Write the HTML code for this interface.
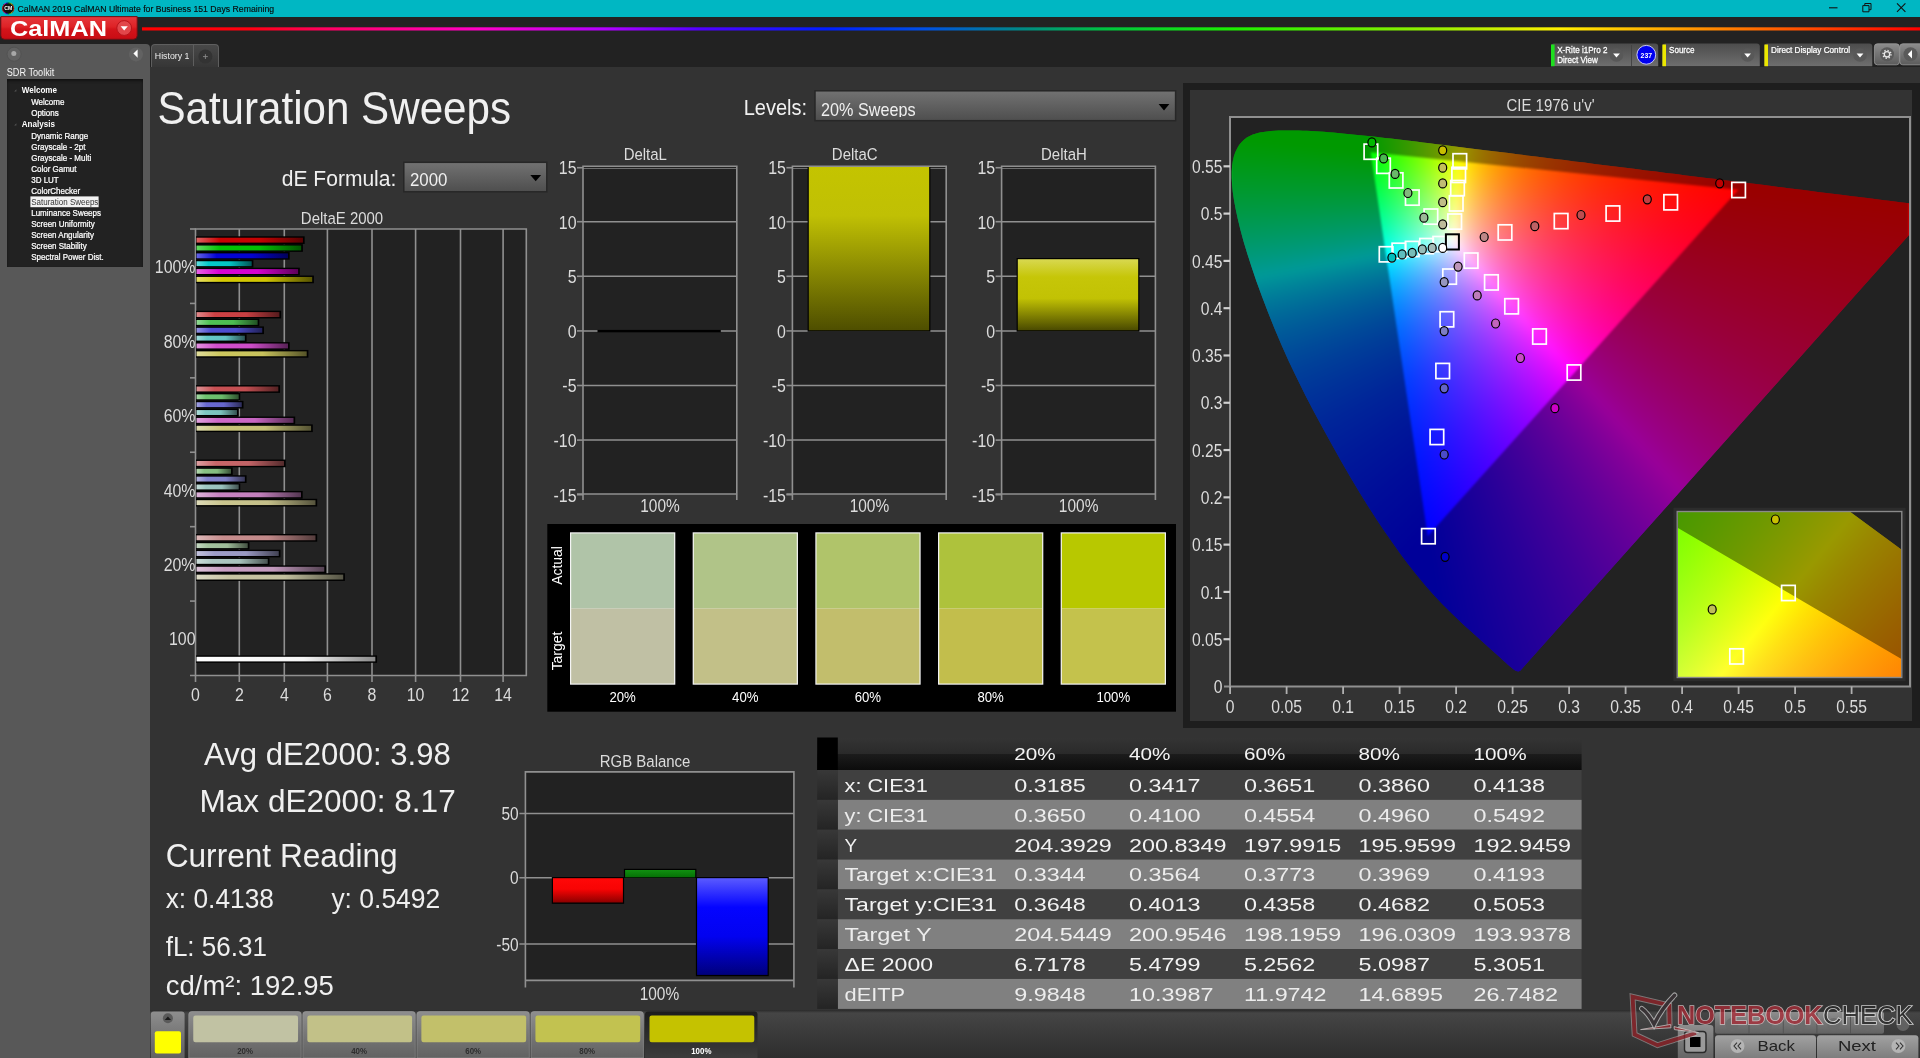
<!DOCTYPE html>
<html><head><meta charset="utf-8"><title>CalMAN 2019 - Saturation Sweeps</title>
<style>
html,body{margin:0;padding:0;background:#222;overflow:hidden}
body{width:1920px;height:1058px;position:relative;font-family:"Liberation Sans",sans-serif}
#bg div{position:absolute}
</style></head><body>
<div id="bg"><div style="left:0px;top:0px;width:1920px;height:17px;background:#00b7c3"></div><div style="left:150px;top:66.6px;width:1770px;height:943.4px;background:#333"></div><div style="left:0px;top:43.5px;width:149.5px;height:1015px;background:#585858;border-radius:0 4px 0 0"></div><div style="left:7px;top:79.2px;width:136px;height:188px;background:#222;box-shadow:inset 0 2px 3px #111"></div><div style="left:151px;top:43.6px;width:67.5px;height:23px;background:linear-gradient(#484848,#363636);border:1.2px solid #5e5e5e;border-bottom:none;border-radius:4px 4px 0 0;box-sizing:border-box"></div><div style="left:193.2px;top:44.5px;width:1.2px;height:21.6px;background:#5e5e5e"></div><div style="left:1183px;top:83px;width:737px;height:645px;background:#1e1e1e"></div><div style="left:1190px;top:90px;width:722px;height:630.5px;background:#333"></div><div style="left:1231px;top:118px;width:678px;height:568px;background:#222"></div><div style="left:150px;top:1010px;width:1770px;height:48px;background:linear-gradient(#2a2a2a 0,#454545 3px,#3a3a3a 50%,#2e2e2e 100%)"></div></div>
<div style="position:absolute;left:1231px;top:118px;width:678px;height:568px;clip-path:polygon(289.3px 552.7px,289.2px 552.8px,289.0px 552.9px,288.6px 553.1px,288.0px 553.3px,287.3px 553.4px,286.4px 553.3px,285.3px 553.0px,284.1px 552.4px,282.7px 551.5px,281.1px 550.3px,279.3px 548.8px,277.2px 547.0px,274.8px 544.8px,272.0px 542.2px,268.5px 539.1px,264.3px 535.2px,259.2px 530.7px,253.7px 525.7px,248.2px 520.8px,243.2px 516.3px,239.1px 512.6px,235.6px 509.5px,232.3px 506.5px,228.9px 503.2px,225.0px 499.5px,220.6px 495.3px,216.0px 490.7px,211.2px 485.9px,206.3px 480.8px,201.2px 475.3px,195.9px 469.2px,190.0px 462.3px,183.7px 454.5px,176.8px 445.7px,169.5px 435.9px,161.9px 425.3px,154.0px 413.9px,145.8px 401.7px,137.4px 388.7px,128.7px 374.8px,119.9px 360.0px,110.9px 344.5px,101.8px 328.3px,92.7px 311.8px,83.6px 294.9px,74.7px 277.9px,66.2px 260.8px,58.0px 243.7px,50.4px 226.8px,43.4px 210.2px,36.9px 194.0px,30.9px 178.3px,25.5px 163.4px,20.6px 149.1px,16.3px 135.7px,12.5px 123.2px,9.4px 111.7px,6.8px 101.0px,4.7px 91.2px,3.0px 82.3px,1.8px 74.1px,1.1px 66.7px,0.7px 59.9px,0.7px 53.8px,1.1px 48.1px,1.8px 43.0px,2.9px 38.3px,4.3px 34.2px,6.1px 30.4px,8.1px 27.1px,10.4px 24.2px,13.0px 21.7px,15.8px 19.6px,18.7px 17.9px,21.9px 16.5px,25.2px 15.4px,28.7px 14.5px,32.3px 13.9px,36.0px 13.4px,39.8px 13.0px,43.7px 12.8px,47.6px 12.6px,51.6px 12.5px,55.7px 12.5px,59.7px 12.4px,63.7px 12.5px,67.7px 12.6px,71.8px 12.7px,75.9px 12.8px,80.1px 13.0px,84.3px 13.3px,88.6px 13.5px,93.0px 13.8px,97.5px 14.2px,102.1px 14.5px,106.8px 15.0px,111.5px 15.4px,116.4px 15.9px,121.4px 16.4px,126.5px 16.9px,131.7px 17.4px,137.0px 18.0px,142.5px 18.6px,148.1px 19.3px,153.9px 19.9px,159.8px 20.6px,165.9px 21.3px,172.1px 22.1px,178.5px 22.8px,185.0px 23.6px,191.8px 24.5px,198.6px 25.3px,205.7px 26.2px,213.0px 27.1px,220.4px 28.0px,228.0px 28.9px,235.8px 29.9px,243.8px 30.9px,252.0px 31.9px,260.3px 33.0px,268.9px 34.0px,277.6px 35.1px,286.5px 36.2px,295.5px 37.4px,304.8px 38.5px,314.2px 39.7px,323.8px 40.9px,333.5px 42.1px,343.4px 43.4px,353.4px 44.6px,363.5px 45.9px,373.7px 47.2px,384.1px 48.5px,394.5px 49.8px,404.8px 51.1px,415.0px 52.4px,425.0px 53.6px,435.0px 54.9px,444.9px 56.1px,455.0px 57.4px,465.3px 58.7px,475.4px 59.9px,485.1px 61.1px,494.0px 62.3px,502.0px 63.2px,509.8px 64.2px,518.6px 65.3px,529.3px 66.6px,542.5px 68.3px,557.4px 70.2px,572.7px 72.1px,587.0px 73.9px,599.4px 75.5px,610.0px 76.8px,619.4px 78.0px,627.9px 79.0px,636.2px 80.1px,644.0px 81.0px,651.3px 82.0px,657.9px 82.8px,663.9px 83.5px,669.1px 84.2px,673.7px 84.8px,677.7px 85.2px,681.0px 85.7px,684.0px 86.0px,686.7px 86.4px,689.4px 86.7px,692.1px 87.1px,694.8px 87.4px,697.3px 87.7px,699.6px 88.0px,701.5px 88.2px,702.8px 88.4px,703.6px 88.5px,703.5px 88.5px);overflow:hidden"><div style="position:absolute;left:-20px;top:-20px;width:718px;height:608px;filter:blur(3px);background:conic-gradient(from 0deg at 527.4px 91.8px,#ffff00 0deg,#ffff00 41.75deg,#ff0000 42deg,#ff0000 95.75deg,#ff00ff 96deg,#ff00ff 222deg,#ff15ff 229.5deg,#ff2aff 235.5deg,#ff3eff 240.25deg,#ff54ff 244.25deg,#ff69ff 247.5deg,#ff7fff 250.25deg,#ff97ff 252.75deg,#ffaeff 254.75deg,#ffc6ff 256.5deg,#ffdeff 258deg,#fff5ff 259.25deg,#fffffe 259.75deg,#ffffd1 262deg,#ffffa4 264.5deg,#ffff76 267.25deg,#ffff49 270.25deg,#ffff1d 273.5deg,#ffff01 275.75deg,#ffff00 276.25deg,#ffff00 360deg),conic-gradient(from 0deg at 159.7px 54.2px,#ffff00 0deg,#ffff00 95.75deg,#ffff21 104deg,#ffff45 111.75deg,#ffff65 118deg,#ffff85 123.25deg,#ffffa3 127.5deg,#ffffc2 131.25deg,#ffffe0 134.5deg,#fffffe 137.25deg,#feffff 137.5deg,#daffff 140.75deg,#b6ffff 144.5deg,#92ffff 148.75deg,#6dffff 153.75deg,#45ffff 159.75deg,#19ffff 167deg,#00ffff 171.5deg,#00ffff 275.75deg,#00ff00 276deg,#00ff00 351.5deg,#ffff00 351.75deg,#ffff00 360deg),conic-gradient(from 0deg at 216.7px 438.2px,#92ffff 0deg,#c1ffff 2.25deg,#efffff 4.25deg,#fbffff 4.75deg,#fffdff 5deg,#ffe1ff 6.25deg,#ffc9ff 7.5deg,#ffb1ff 9deg,#ff9aff 10.75deg,#ff84ff 12.75deg,#ff6dff 15.25deg,#ff59ff 18deg,#ff44ff 21.5deg,#ff30ff 25.75deg,#ff1dff 31deg,#ff0aff 37.5deg,#ff00ff 42deg,#ff00ff 171.5deg,#0000ff 171.75deg,#0000ff 221.75deg,#00ffff 222deg,#00ffff 351.5deg,#07ffff 352deg,#37ffff 355deg,#67ffff 357.75deg,#92ffff 360deg);background-blend-mode:darken,darken,normal"></div><svg width="678" height="568" style="position:absolute;left:0;top:0;filter:blur(.8px)"><path d="M-9 -9H687V577H-9Z M507.4 71.8 139.7 34.2 196.7 418.2Z" fill-rule="evenodd" fill="#000" opacity=".4"/></svg></div>
<div style="position:absolute;left:1678px;top:512.3px;width:223px;height:164.4px;overflow:hidden;background:#222"><div style="position:absolute;left:0;top:0;width:223px;height:164.4px;clip-path:polygon(-456.5px 935.7px,-458.4px 936.1px,-462.7px 935.5px,-468.5px 932.5px,-478.9px 925.6px,-497.0px 914.0px,-509.9px 905.5px,-526.1px 893.5px,-545.7px 876.1px,-572.1px 845.5px,-605.6px 795.9px,-647.9px 717.5px,-700.2px 601.3px,-754.1px 440.1px,-804.7px 239.0px,-840.1px 24.1px,-850.0px -174.8px,-826.9px -337.8px,-769.1px -443.5px,-687.2px -480.7px,-595.0px -467.7px,-501.4px -433.0px,-413.0px -391.5px,-328.2px -344.8px,-244.5px -293.6px,-161.7px -238.9px,-79.2px -181.8px,3.6px -123.0px,85.9px -63.4px,167.7px -3.7px,248.0px 55.2px,325.9px 112.7px,400.6px 167.7px,470.8px 219.3px,534.9px 266.6px,590.6px 307.7px,639.6px 343.7px,680.3px 373.5px,739.7px 417.4px,777.6px 445.2px,803.3px 464.2px,819.5px 476.0px,828.7px 482.8px,836.6px 488.6px,839.6px 490.9px)"><div style="position:absolute;left:0;top:0;width:223px;height:164.4px;background:conic-gradient(from 0deg at 620.7px 380.3px,#ffff00 0deg,#ffff00 67.82deg,#ff0000 67.84deg,#ff0000 120.4deg,#ff00ff 120.42deg,#ff00ff 247.9deg,#ff25ff 252.4deg,#ff49ff 256.32deg,#ff6eff 259.76deg,#ff92ff 262.8deg,#ffb7ff 265.5deg,#ffddff 267.92deg,#ffffff 269.9deg,#ffffdf 271.74deg,#ffffc0 273.82deg,#ffffa3 276.18deg,#ffff86 278.88deg,#ffff6a 282deg,#ffff4e 285.62deg,#ffff34 289.86deg,#ffff19 294.9deg,#ffff00 300.44deg,#ffff00 360deg),conic-gradient(from 0deg at -165.4px -81.1px,#00ff00 0deg,#00ff00 20.58deg,#ffff00 20.6deg,#ffff01 120.68deg,#ffff21 134.34deg,#ffff3c 143.78deg,#ffff55 151.1deg,#ffff6d 157deg,#ffff86 161.88deg,#ffff9f 165.96deg,#ffffb8 169.42deg,#ffffd2 172.38deg,#ffffee 174.94deg,#ffffff 176.4deg,#cbffff 180.62deg,#94ffff 185.46deg,#59ffff 191.18deg,#15ffff 198.32deg,#00ffff 200.66deg,#00ffff 300.4deg,#00ff00 300.42deg,#00ff00 360deg),conic-gradient(from 0deg at -512.2px 841.7px,#00ffff 0deg,#00ffff 20.65deg,#25ffff 24.4deg,#49ffff 27.7deg,#6effff 30.65deg,#93ffff 33.25deg,#b8ffff 35.6deg,#dfffff 37.7deg,#ffffff 39.3deg,#ffe0ff 40.85deg,#ffc3ff 42.6deg,#ffa6ff 44.6deg,#ff8aff 46.9deg,#ff6fff 49.55deg,#ff55ff 52.6deg,#ff3cff 56.15deg,#ff23ff 60.35deg,#ff0aff 65.4deg,#ff00ff 67.95deg,#ff00ff 200.55deg,#0000ff 200.6deg,#0000ff 247.8deg,#00ffff 247.85deg,#00ffff 360deg);background-blend-mode:darken,darken,normal"></div><svg width="223" height="164.4" style="position:absolute;left:0;top:0"><path d="M-9 -9H232V173.4H-9Z M620.7 380.3 -165.4 -81.1 -512.2 841.7Z" fill-rule="evenodd" fill="#000" opacity=".4"/></svg></div></div>
<svg width="1920" height="1058" viewBox="0 0 1920 1058" style="position:absolute;left:0;top:0;will-change:transform" font-family="Liberation Sans, sans-serif"><defs><linearGradient id="b00"><stop offset="0" stop-color="#de6363"/><stop offset=".22" stop-color="#ca0303"/><stop offset=".6" stop-color="#c40303"/><stop offset="1" stop-color="#550101"/></linearGradient><linearGradient id="b01"><stop offset="0" stop-color="#63db63"/><stop offset=".22" stop-color="#03c503"/><stop offset=".6" stop-color="#03bf03"/><stop offset="1" stop-color="#015301"/></linearGradient><linearGradient id="b02"><stop offset="0" stop-color="#6363e5"/><stop offset=".22" stop-color="#0303d5"/><stop offset=".6" stop-color="#0303cf"/><stop offset="1" stop-color="#010159"/></linearGradient><linearGradient id="b03"><stop offset="0" stop-color="#63dede"/><stop offset=".22" stop-color="#03caca"/><stop offset=".6" stop-color="#03c4c4"/><stop offset="1" stop-color="#015555"/></linearGradient><linearGradient id="b04"><stop offset="0" stop-color="#e863e5"/><stop offset=".22" stop-color="#da03d5"/><stop offset=".6" stop-color="#d403cf"/><stop offset="1" stop-color="#5c0159"/></linearGradient><linearGradient id="b05"><stop offset="0" stop-color="#e5de63"/><stop offset=".22" stop-color="#d5ca03"/><stop offset=".6" stop-color="#cfc403"/><stop offset="1" stop-color="#595501"/></linearGradient><linearGradient id="b10"><stop offset="0" stop-color="#e0898b"/><stop offset=".22" stop-color="#cd4144"/><stop offset=".6" stop-color="#c73f42"/><stop offset="1" stop-color="#561b1d"/></linearGradient><linearGradient id="b11"><stop offset="0" stop-color="#92d995"/><stop offset=".22" stop-color="#4fc254"/><stop offset=".6" stop-color="#4cbc51"/><stop offset="1" stop-color="#215223"/></linearGradient><linearGradient id="b12"><stop offset="0" stop-color="#9292e3"/><stop offset=".22" stop-color="#4f4fd2"/><stop offset=".6" stop-color="#4c4ccc"/><stop offset="1" stop-color="#212158"/></linearGradient><linearGradient id="b13"><stop offset="0" stop-color="#9fdddd"/><stop offset=".22" stop-color="#64c8c8"/><stop offset=".6" stop-color="#61c2c2"/><stop offset="1" stop-color="#2a5454"/></linearGradient><linearGradient id="b14"><stop offset="0" stop-color="#e392e0"/><stop offset=".22" stop-color="#d24fcd"/><stop offset=".6" stop-color="#cc4cc7"/><stop offset="1" stop-color="#582156"/></linearGradient><linearGradient id="b15"><stop offset="0" stop-color="#e0dd9b"/><stop offset=".22" stop-color="#cdc85e"/><stop offset=".6" stop-color="#c7c25c"/><stop offset="1" stop-color="#565428"/></linearGradient><linearGradient id="b20"><stop offset="0" stop-color="#dd9395"/><stop offset=".22" stop-color="#c85154"/><stop offset=".6" stop-color="#c24e51"/><stop offset="1" stop-color="#542223"/></linearGradient><linearGradient id="b21"><stop offset="0" stop-color="#a5d9a5"/><stop offset=".22" stop-color="#6ec26e"/><stop offset=".6" stop-color="#6bbc6b"/><stop offset="1" stop-color="#2e522e"/></linearGradient><linearGradient id="b22"><stop offset="0" stop-color="#a2a2e3"/><stop offset=".22" stop-color="#6969d2"/><stop offset=".6" stop-color="#6666cc"/><stop offset="1" stop-color="#2c2c58"/></linearGradient><linearGradient id="b23"><stop offset="0" stop-color="#afddd9"/><stop offset=".22" stop-color="#7ec8c2"/><stop offset=".6" stop-color="#7ac2bc"/><stop offset="1" stop-color="#355452"/></linearGradient><linearGradient id="b24"><stop offset="0" stop-color="#e0a2dd"/><stop offset=".22" stop-color="#cd69c8"/><stop offset=".6" stop-color="#c766c2"/><stop offset="1" stop-color="#562c54"/></linearGradient><linearGradient id="b25"><stop offset="0" stop-color="#dedbac"/><stop offset=".22" stop-color="#cac579"/><stop offset=".6" stop-color="#c4bf75"/><stop offset="1" stop-color="#555333"/></linearGradient><linearGradient id="b30"><stop offset="0" stop-color="#dda0a2"/><stop offset=".22" stop-color="#c86669"/><stop offset=".6" stop-color="#c26366"/><stop offset="1" stop-color="#542b2c"/></linearGradient><linearGradient id="b31"><stop offset="0" stop-color="#b6d9b2"/><stop offset=".22" stop-color="#88c283"/><stop offset=".6" stop-color="#84bc7f"/><stop offset="1" stop-color="#395237"/></linearGradient><linearGradient id="b32"><stop offset="0" stop-color="#b2b2e0"/><stop offset=".22" stop-color="#8383cd"/><stop offset=".6" stop-color="#7f7fc7"/><stop offset="1" stop-color="#373756"/></linearGradient><linearGradient id="b33"><stop offset="0" stop-color="#c3ddd9"/><stop offset=".22" stop-color="#9ec8c2"/><stop offset=".6" stop-color="#99c2bc"/><stop offset="1" stop-color="#425452"/></linearGradient><linearGradient id="b34"><stop offset="0" stop-color="#ddb2d9"/><stop offset=".22" stop-color="#c883c2"/><stop offset=".6" stop-color="#c27fbc"/><stop offset="1" stop-color="#543752"/></linearGradient><linearGradient id="b35"><stop offset="0" stop-color="#dedbb9"/><stop offset=".22" stop-color="#cac58e"/><stop offset=".6" stop-color="#c4bf89"/><stop offset="1" stop-color="#55533c"/></linearGradient><linearGradient id="b40"><stop offset="0" stop-color="#ddb9b9"/><stop offset=".22" stop-color="#c88e8e"/><stop offset=".6" stop-color="#c28989"/><stop offset="1" stop-color="#543c3c"/></linearGradient><linearGradient id="b41"><stop offset="0" stop-color="#c6d9c3"/><stop offset=".22" stop-color="#a3c29e"/><stop offset=".6" stop-color="#9ebc99"/><stop offset="1" stop-color="#445242"/></linearGradient><linearGradient id="b42"><stop offset="0" stop-color="#c3c3dd"/><stop offset=".22" stop-color="#9e9ec8"/><stop offset=".6" stop-color="#9999c2"/><stop offset="1" stop-color="#424254"/></linearGradient><linearGradient id="b43"><stop offset="0" stop-color="#ccddd9"/><stop offset=".22" stop-color="#adc8c2"/><stop offset=".6" stop-color="#a8c2bc"/><stop offset="1" stop-color="#495452"/></linearGradient><linearGradient id="b44"><stop offset="0" stop-color="#ddc3d9"/><stop offset=".22" stop-color="#c89ec2"/><stop offset=".6" stop-color="#c299bc"/><stop offset="1" stop-color="#544252"/></linearGradient><linearGradient id="b45"><stop offset="0" stop-color="#dddbc6"/><stop offset=".22" stop-color="#c8c5a3"/><stop offset=".6" stop-color="#c2bf9e"/><stop offset="1" stop-color="#545344"/></linearGradient><linearGradient id="bw"><stop offset="0" stop-color="#fff"/><stop offset=".6" stop-color="#f4f4f4"/><stop offset="1" stop-color="#8a8a8a"/></linearGradient><linearGradient id="yb" x1="0" y1="0" x2="0" y2="1"><stop offset="0" stop-color="#c4c400"/><stop offset=".3" stop-color="#c0c004"/><stop offset="1" stop-color="#4e4e00"/></linearGradient><linearGradient id="yh" x1="0" y1="0" x2="0" y2="1"><stop offset="0" stop-color="#d8d850"/><stop offset=".25" stop-color="#c6c608"/><stop offset=".55" stop-color="#c2c204"/><stop offset="1" stop-color="#4a4a00"/></linearGradient><linearGradient id="gr" x1="0" y1="0" x2="0" y2="1"><stop offset="0" stop-color="#ff0808"/><stop offset=".45" stop-color="#f80404"/><stop offset="1" stop-color="#8c0000"/></linearGradient><linearGradient id="gg" x1="0" y1="0" x2="0" y2="1"><stop offset="0" stop-color="#109010"/><stop offset="1" stop-color="#067006"/></linearGradient><linearGradient id="gb" x1="0" y1="0" x2="0" y2="1"><stop offset="0" stop-color="#5a5aff"/><stop offset=".3" stop-color="#0404ff"/><stop offset=".6" stop-color="#0202f0"/><stop offset="1" stop-color="#00007c"/></linearGradient><linearGradient id="dd" x1="0" y1="0" x2="0" y2="1"><stop offset="0" stop-color="#727272"/><stop offset=".5" stop-color="#606060"/><stop offset="1" stop-color="#4e4e4e"/></linearGradient><linearGradient id="dd2" x1="0" y1="0" x2="0" y2="1"><stop offset="0" stop-color="#727272"/><stop offset=".5" stop-color="#606060"/><stop offset="1" stop-color="#4e4e4e"/></linearGradient><linearGradient id="th" x1="0" y1="0" x2="0" y2="1"><stop offset="0" stop-color="#343434"/><stop offset=".5" stop-color="#2a2a2a"/><stop offset=".5" stop-color="#1c1c1c"/><stop offset="1" stop-color="#0c0c0c"/></linearGradient><linearGradient id="tg" x1="0" y1="0" x2="0" y2="1"><stop offset="0" stop-color="#383838"/><stop offset="1" stop-color="#242424"/></linearGradient><linearGradient id="cm" x1="0" y1="0" x2="0" y2="1"><stop offset="0" stop-color="#e4383c"/><stop offset=".45" stop-color="#de2226"/><stop offset=".55" stop-color="#d4141a"/><stop offset="1" stop-color="#c80c14"/></linearGradient><linearGradient id="rb"><stop offset="0" stop-color="#ff0000"/><stop offset=".06" stop-color="#ff0010"/><stop offset=".105" stop-color="#ff0064"/><stop offset=".19" stop-color="#ff00c8"/><stop offset=".26" stop-color="#b400ff"/><stop offset=".315" stop-color="#5000ff"/><stop offset=".385" stop-color="#001eff"/><stop offset=".44" stop-color="#0050e6"/><stop offset=".497" stop-color="#008c82"/><stop offset=".545" stop-color="#00c83c"/><stop offset=".615" stop-color="#1ef000"/><stop offset=".727" stop-color="#96f000"/><stop offset=".797" stop-color="#fff000"/><stop offset=".88" stop-color="#ff8c00"/><stop offset=".95" stop-color="#ff3c00"/><stop offset="1" stop-color="#ff0000"/></linearGradient><linearGradient id="wg" x1="0" y1="0" x2="0" y2="1"><stop offset="0" stop-color="#4c4c4c"/><stop offset="1" stop-color="#6e6e6e"/></linearGradient><linearGradient id="bt" x1="0" y1="0" x2="0" y2="1"><stop offset="0" stop-color="#8c8c8c"/><stop offset="1" stop-color="#5c5c5c"/></linearGradient><linearGradient id="tb" x1="0" y1="0" x2="0" y2="1"><stop offset="0" stop-color="#8e8e8e"/><stop offset=".5" stop-color="#767676"/><stop offset="1" stop-color="#626262"/></linearGradient><linearGradient id="tbs" x1="0" y1="0" x2="0" y2="1"><stop offset="0" stop-color="#1c1c1c"/><stop offset="1" stop-color="#3c3c3c"/></linearGradient><linearGradient id="nb" x1="0" y1="0" x2="0" y2="1"><stop offset="0" stop-color="#a2a2a2"/><stop offset="1" stop-color="#787878"/></linearGradient></defs>
<rect x="196.00" y="229.00" width="330.00" height="446.50" fill="#222"/>
<line x1="239.30" y1="229.00" x2="239.30" y2="675.50" stroke="#909090" stroke-width="1.6"/>
<line x1="284.30" y1="229.00" x2="284.30" y2="675.50" stroke="#909090" stroke-width="1.6"/>
<line x1="327.40" y1="229.00" x2="327.40" y2="675.50" stroke="#909090" stroke-width="1.6"/>
<line x1="372.00" y1="229.00" x2="372.00" y2="675.50" stroke="#909090" stroke-width="1.6"/>
<line x1="415.60" y1="229.00" x2="415.60" y2="675.50" stroke="#909090" stroke-width="1.6"/>
<line x1="460.50" y1="229.00" x2="460.50" y2="675.50" stroke="#909090" stroke-width="1.6"/>
<line x1="503.10" y1="229.00" x2="503.10" y2="675.50" stroke="#909090" stroke-width="1.6"/>
<path d="M195.5 682.0V229.0H526.3V675.5H190.0" fill="none" stroke="#909090" stroke-width="1.6"/>
<line x1="239.30" y1="675.50" x2="239.30" y2="682.00" stroke="#909090" stroke-width="1.6"/>
<line x1="284.30" y1="675.50" x2="284.30" y2="682.00" stroke="#909090" stroke-width="1.6"/>
<line x1="327.40" y1="675.50" x2="327.40" y2="682.00" stroke="#909090" stroke-width="1.6"/>
<line x1="372.00" y1="675.50" x2="372.00" y2="682.00" stroke="#909090" stroke-width="1.6"/>
<line x1="415.60" y1="675.50" x2="415.60" y2="682.00" stroke="#909090" stroke-width="1.6"/>
<line x1="460.50" y1="675.50" x2="460.50" y2="682.00" stroke="#909090" stroke-width="1.6"/>
<line x1="503.10" y1="675.50" x2="503.10" y2="682.00" stroke="#909090" stroke-width="1.6"/>
<line x1="190.00" y1="229.00" x2="196.00" y2="229.00" stroke="#909090" stroke-width="1.6"/>
<line x1="190.00" y1="303.42" x2="196.00" y2="303.42" stroke="#909090" stroke-width="1.6"/>
<line x1="190.00" y1="377.83" x2="196.00" y2="377.83" stroke="#909090" stroke-width="1.6"/>
<line x1="190.00" y1="452.25" x2="196.00" y2="452.25" stroke="#909090" stroke-width="1.6"/>
<line x1="190.00" y1="526.67" x2="196.00" y2="526.67" stroke="#909090" stroke-width="1.6"/>
<line x1="190.00" y1="601.08" x2="196.00" y2="601.08" stroke="#909090" stroke-width="1.6"/>
<text transform="translate(195.5,273.2) scale(0.86,1)" font-size="18.5" fill="#dcdcdc" text-anchor="end">100%</text>
<text transform="translate(195.5,347.6) scale(0.86,1)" font-size="18.5" fill="#dcdcdc" text-anchor="end">80%</text>
<text transform="translate(195.5,422.0) scale(0.86,1)" font-size="18.5" fill="#dcdcdc" text-anchor="end">60%</text>
<text transform="translate(195.5,496.5) scale(0.86,1)" font-size="18.5" fill="#dcdcdc" text-anchor="end">40%</text>
<text transform="translate(195.5,570.9) scale(0.86,1)" font-size="18.5" fill="#dcdcdc" text-anchor="end">20%</text>
<text transform="translate(195.5,645.3) scale(0.86,1)" font-size="18.5" fill="#dcdcdc" text-anchor="end">100</text>
<text transform="translate(195.5,700.8) scale(0.86,1)" font-size="18.5" fill="#dcdcdc" text-anchor="middle">0</text>
<text transform="translate(239.3,700.8) scale(0.86,1)" font-size="18.5" fill="#dcdcdc" text-anchor="middle">2</text>
<text transform="translate(284.3,700.8) scale(0.86,1)" font-size="18.5" fill="#dcdcdc" text-anchor="middle">4</text>
<text transform="translate(327.4,700.8) scale(0.86,1)" font-size="18.5" fill="#dcdcdc" text-anchor="middle">6</text>
<text transform="translate(372.0,700.8) scale(0.86,1)" font-size="18.5" fill="#dcdcdc" text-anchor="middle">8</text>
<text transform="translate(415.6,700.8) scale(0.86,1)" font-size="18.5" fill="#dcdcdc" text-anchor="middle">10</text>
<text transform="translate(460.5,700.8) scale(0.86,1)" font-size="18.5" fill="#dcdcdc" text-anchor="middle">12</text>
<text transform="translate(503.1,700.8) scale(0.86,1)" font-size="18.5" fill="#dcdcdc" text-anchor="middle">14</text>
<text transform="translate(342.0,223.5) scale(0.88,1)" font-size="17" fill="#dcdcdc" text-anchor="middle">DeltaE 2000</text>
<rect x="196.00" y="236.30" width="108.66" height="7.70" fill="#000"/>
<rect x="196.50" y="237.70" width="106.46" height="4.90" fill="url(#b00)"/>
<rect x="196.00" y="244.15" width="106.90" height="7.70" fill="#000"/>
<rect x="196.50" y="245.55" width="104.70" height="4.90" fill="url(#b01)"/>
<rect x="196.00" y="252.00" width="93.70" height="7.70" fill="#000"/>
<rect x="196.50" y="253.40" width="91.50" height="4.90" fill="url(#b02)"/>
<rect x="196.00" y="259.85" width="57.40" height="7.70" fill="#000"/>
<rect x="196.50" y="261.25" width="55.20" height="4.90" fill="url(#b03)"/>
<rect x="196.00" y="267.70" width="103.82" height="7.70" fill="#000"/>
<rect x="196.50" y="269.10" width="101.62" height="4.90" fill="url(#b04)"/>
<rect x="196.00" y="275.55" width="117.90" height="7.70" fill="#000"/>
<rect x="196.50" y="276.95" width="115.70" height="4.90" fill="url(#b05)"/>
<rect x="196.00" y="310.72" width="85.12" height="7.70" fill="#000"/>
<rect x="196.50" y="312.12" width="82.92" height="4.90" fill="url(#b10)"/>
<rect x="196.00" y="318.57" width="63.34" height="7.70" fill="#000"/>
<rect x="196.50" y="319.97" width="61.14" height="4.90" fill="url(#b11)"/>
<rect x="196.00" y="326.42" width="67.96" height="7.70" fill="#000"/>
<rect x="196.50" y="327.82" width="65.76" height="4.90" fill="url(#b12)"/>
<rect x="196.00" y="334.27" width="50.58" height="7.70" fill="#000"/>
<rect x="196.50" y="335.67" width="48.38" height="4.90" fill="url(#b13)"/>
<rect x="196.00" y="342.12" width="93.70" height="7.70" fill="#000"/>
<rect x="196.50" y="343.52" width="91.50" height="4.90" fill="url(#b14)"/>
<rect x="196.00" y="349.97" width="112.40" height="7.70" fill="#000"/>
<rect x="196.50" y="351.37" width="110.20" height="4.90" fill="url(#b15)"/>
<rect x="196.00" y="385.13" width="84.02" height="7.70" fill="#000"/>
<rect x="196.50" y="386.53" width="81.82" height="4.90" fill="url(#b20)"/>
<rect x="196.00" y="392.98" width="44.42" height="7.70" fill="#000"/>
<rect x="196.50" y="394.38" width="42.22" height="4.90" fill="url(#b21)"/>
<rect x="196.00" y="400.83" width="47.50" height="7.70" fill="#000"/>
<rect x="196.50" y="402.23" width="45.30" height="4.90" fill="url(#b22)"/>
<rect x="196.00" y="408.68" width="42.66" height="7.70" fill="#000"/>
<rect x="196.50" y="410.08" width="40.46" height="4.90" fill="url(#b23)"/>
<rect x="196.00" y="416.53" width="99.20" height="7.70" fill="#000"/>
<rect x="196.50" y="417.93" width="97.00" height="4.90" fill="url(#b24)"/>
<rect x="196.00" y="424.38" width="116.80" height="7.70" fill="#000"/>
<rect x="196.50" y="425.78" width="114.60" height="4.90" fill="url(#b25)"/>
<rect x="196.00" y="459.55" width="89.74" height="7.70" fill="#000"/>
<rect x="196.50" y="460.95" width="87.54" height="4.90" fill="url(#b30)"/>
<rect x="196.00" y="467.40" width="36.72" height="7.70" fill="#000"/>
<rect x="196.50" y="468.80" width="34.52" height="4.90" fill="url(#b31)"/>
<rect x="196.00" y="475.25" width="50.58" height="7.70" fill="#000"/>
<rect x="196.50" y="476.65" width="48.38" height="4.90" fill="url(#b32)"/>
<rect x="196.00" y="483.10" width="44.42" height="7.70" fill="#000"/>
<rect x="196.50" y="484.50" width="42.22" height="4.90" fill="url(#b33)"/>
<rect x="196.00" y="490.95" width="106.68" height="7.70" fill="#000"/>
<rect x="196.50" y="492.35" width="104.48" height="4.90" fill="url(#b34)"/>
<rect x="196.00" y="498.80" width="121.20" height="7.70" fill="#000"/>
<rect x="196.50" y="500.20" width="119.00" height="4.90" fill="url(#b35)"/>
<rect x="196.00" y="533.97" width="121.20" height="7.70" fill="#000"/>
<rect x="196.50" y="535.37" width="119.00" height="4.90" fill="url(#b40)"/>
<rect x="196.00" y="541.82" width="53.44" height="7.70" fill="#000"/>
<rect x="196.50" y="543.22" width="51.24" height="4.90" fill="url(#b41)"/>
<rect x="196.00" y="549.67" width="84.46" height="7.70" fill="#000"/>
<rect x="196.50" y="551.07" width="82.26" height="4.90" fill="url(#b42)"/>
<rect x="196.00" y="557.52" width="73.46" height="7.70" fill="#000"/>
<rect x="196.50" y="558.92" width="71.26" height="4.90" fill="url(#b43)"/>
<rect x="196.00" y="565.37" width="130.00" height="7.70" fill="#000"/>
<rect x="196.50" y="566.77" width="127.80" height="4.90" fill="url(#b44)"/>
<rect x="196.00" y="573.22" width="148.92" height="7.70" fill="#000"/>
<rect x="196.50" y="574.62" width="146.72" height="4.90" fill="url(#b45)"/>
<rect x="196.00" y="655.40" width="181.04" height="7.40" fill="#000"/>
<rect x="196.50" y="656.80" width="178.84" height="4.60" fill="url(#bw)"/>
<rect x="583.00" y="166.30" width="153.80" height="327.70" fill="#222"/>
<line x1="577.00" y1="167.70" x2="583.00" y2="167.70" stroke="#909090" stroke-width="1.6"/>
<text transform="translate(576.5,173.9) scale(0.86,1)" font-size="18.5" fill="#dcdcdc" text-anchor="end">15</text>
<line x1="583.00" y1="221.70" x2="736.80" y2="221.70" stroke="#909090" stroke-width="1.5"/>
<line x1="577.00" y1="221.70" x2="583.00" y2="221.70" stroke="#909090" stroke-width="1.6"/>
<text transform="translate(576.5,228.5) scale(0.86,1)" font-size="18.5" fill="#dcdcdc" text-anchor="end">10</text>
<line x1="583.00" y1="276.30" x2="736.80" y2="276.30" stroke="#909090" stroke-width="1.5"/>
<line x1="577.00" y1="276.30" x2="583.00" y2="276.30" stroke="#909090" stroke-width="1.6"/>
<text transform="translate(576.5,283.1) scale(0.86,1)" font-size="18.5" fill="#dcdcdc" text-anchor="end">5</text>
<line x1="583.00" y1="330.90" x2="736.80" y2="330.90" stroke="#909090" stroke-width="1.5"/>
<line x1="577.00" y1="330.90" x2="583.00" y2="330.90" stroke="#909090" stroke-width="1.6"/>
<text transform="translate(576.5,337.7) scale(0.86,1)" font-size="18.5" fill="#dcdcdc" text-anchor="end">0</text>
<line x1="583.00" y1="385.50" x2="736.80" y2="385.50" stroke="#909090" stroke-width="1.5"/>
<line x1="577.00" y1="385.50" x2="583.00" y2="385.50" stroke="#909090" stroke-width="1.6"/>
<text transform="translate(576.5,392.3) scale(0.86,1)" font-size="18.5" fill="#dcdcdc" text-anchor="end">-5</text>
<line x1="583.00" y1="440.10" x2="736.80" y2="440.10" stroke="#909090" stroke-width="1.5"/>
<line x1="577.00" y1="440.10" x2="583.00" y2="440.10" stroke="#909090" stroke-width="1.6"/>
<text transform="translate(576.5,446.9) scale(0.86,1)" font-size="18.5" fill="#dcdcdc" text-anchor="end">-10</text>
<line x1="577.00" y1="494.70" x2="583.00" y2="494.70" stroke="#909090" stroke-width="1.6"/>
<text transform="translate(576.5,501.5) scale(0.86,1)" font-size="18.5" fill="#dcdcdc" text-anchor="end">-15</text>
<line x1="583.00" y1="168.50" x2="736.80" y2="168.50" stroke="#6e6e6e" stroke-width="1.2"/>
<rect x="597.50" y="329.90" width="123.30" height="2.40" fill="#000"/>
<path d="M583.0 500.0V166.3H736.8V500.0M577.0 494.0H736.8" fill="none" stroke="#909090" stroke-width="1.6"/>
<text transform="translate(660.0,511.8) scale(0.86,1)" font-size="18" fill="#dcdcdc" text-anchor="middle">100%</text>
<text transform="translate(645.3,160.4) scale(0.88,1)" font-size="17" fill="#dcdcdc" text-anchor="middle">DeltaL</text>
<rect x="792.40" y="166.30" width="153.80" height="327.70" fill="#222"/>
<line x1="786.40" y1="167.70" x2="792.40" y2="167.70" stroke="#909090" stroke-width="1.6"/>
<text transform="translate(785.9,173.9) scale(0.86,1)" font-size="18.5" fill="#dcdcdc" text-anchor="end">15</text>
<line x1="792.40" y1="221.70" x2="946.20" y2="221.70" stroke="#909090" stroke-width="1.5"/>
<line x1="786.40" y1="221.70" x2="792.40" y2="221.70" stroke="#909090" stroke-width="1.6"/>
<text transform="translate(785.9,228.5) scale(0.86,1)" font-size="18.5" fill="#dcdcdc" text-anchor="end">10</text>
<line x1="792.40" y1="276.30" x2="946.20" y2="276.30" stroke="#909090" stroke-width="1.5"/>
<line x1="786.40" y1="276.30" x2="792.40" y2="276.30" stroke="#909090" stroke-width="1.6"/>
<text transform="translate(785.9,283.1) scale(0.86,1)" font-size="18.5" fill="#dcdcdc" text-anchor="end">5</text>
<line x1="792.40" y1="330.90" x2="946.20" y2="330.90" stroke="#909090" stroke-width="1.5"/>
<line x1="786.40" y1="330.90" x2="792.40" y2="330.90" stroke="#909090" stroke-width="1.6"/>
<text transform="translate(785.9,337.7) scale(0.86,1)" font-size="18.5" fill="#dcdcdc" text-anchor="end">0</text>
<line x1="792.40" y1="385.50" x2="946.20" y2="385.50" stroke="#909090" stroke-width="1.5"/>
<line x1="786.40" y1="385.50" x2="792.40" y2="385.50" stroke="#909090" stroke-width="1.6"/>
<text transform="translate(785.9,392.3) scale(0.86,1)" font-size="18.5" fill="#dcdcdc" text-anchor="end">-5</text>
<line x1="792.40" y1="440.10" x2="946.20" y2="440.10" stroke="#909090" stroke-width="1.5"/>
<line x1="786.40" y1="440.10" x2="792.40" y2="440.10" stroke="#909090" stroke-width="1.6"/>
<text transform="translate(785.9,446.9) scale(0.86,1)" font-size="18.5" fill="#dcdcdc" text-anchor="end">-10</text>
<line x1="786.40" y1="494.70" x2="792.40" y2="494.70" stroke="#909090" stroke-width="1.6"/>
<text transform="translate(785.9,501.5) scale(0.86,1)" font-size="18.5" fill="#dcdcdc" text-anchor="end">-15</text>
<line x1="792.40" y1="168.50" x2="946.20" y2="168.50" stroke="#6e6e6e" stroke-width="1.2"/>
<rect x="807.60" y="166.50" width="122.80" height="165.20" fill="#000"/>
<rect x="808.80" y="166.50" width="120.40" height="163.80" fill="url(#yb)"/>
<path d="M792.4 500.0V166.3H946.2V500.0M786.4 494.0H946.2" fill="none" stroke="#909090" stroke-width="1.6"/>
<text transform="translate(869.4,511.8) scale(0.86,1)" font-size="18" fill="#dcdcdc" text-anchor="middle">100%</text>
<text transform="translate(854.7,160.4) scale(0.88,1)" font-size="17" fill="#dcdcdc" text-anchor="middle">DeltaC</text>
<rect x="1001.60" y="166.30" width="153.80" height="327.70" fill="#222"/>
<line x1="995.60" y1="167.70" x2="1001.60" y2="167.70" stroke="#909090" stroke-width="1.6"/>
<text transform="translate(995.1,173.9) scale(0.86,1)" font-size="18.5" fill="#dcdcdc" text-anchor="end">15</text>
<line x1="1001.60" y1="221.70" x2="1155.40" y2="221.70" stroke="#909090" stroke-width="1.5"/>
<line x1="995.60" y1="221.70" x2="1001.60" y2="221.70" stroke="#909090" stroke-width="1.6"/>
<text transform="translate(995.1,228.5) scale(0.86,1)" font-size="18.5" fill="#dcdcdc" text-anchor="end">10</text>
<line x1="1001.60" y1="276.30" x2="1155.40" y2="276.30" stroke="#909090" stroke-width="1.5"/>
<line x1="995.60" y1="276.30" x2="1001.60" y2="276.30" stroke="#909090" stroke-width="1.6"/>
<text transform="translate(995.1,283.1) scale(0.86,1)" font-size="18.5" fill="#dcdcdc" text-anchor="end">5</text>
<line x1="1001.60" y1="330.90" x2="1155.40" y2="330.90" stroke="#909090" stroke-width="1.5"/>
<line x1="995.60" y1="330.90" x2="1001.60" y2="330.90" stroke="#909090" stroke-width="1.6"/>
<text transform="translate(995.1,337.7) scale(0.86,1)" font-size="18.5" fill="#dcdcdc" text-anchor="end">0</text>
<line x1="1001.60" y1="385.50" x2="1155.40" y2="385.50" stroke="#909090" stroke-width="1.5"/>
<line x1="995.60" y1="385.50" x2="1001.60" y2="385.50" stroke="#909090" stroke-width="1.6"/>
<text transform="translate(995.1,392.3) scale(0.86,1)" font-size="18.5" fill="#dcdcdc" text-anchor="end">-5</text>
<line x1="1001.60" y1="440.10" x2="1155.40" y2="440.10" stroke="#909090" stroke-width="1.5"/>
<line x1="995.60" y1="440.10" x2="1001.60" y2="440.10" stroke="#909090" stroke-width="1.6"/>
<text transform="translate(995.1,446.9) scale(0.86,1)" font-size="18.5" fill="#dcdcdc" text-anchor="end">-10</text>
<line x1="995.60" y1="494.70" x2="1001.60" y2="494.70" stroke="#909090" stroke-width="1.6"/>
<text transform="translate(995.1,501.5) scale(0.86,1)" font-size="18.5" fill="#dcdcdc" text-anchor="end">-15</text>
<line x1="1001.60" y1="168.50" x2="1155.40" y2="168.50" stroke="#6e6e6e" stroke-width="1.2"/>
<rect x="1016.60" y="258.00" width="122.80" height="73.70" fill="#000"/>
<rect x="1017.80" y="259.20" width="120.40" height="71.10" fill="url(#yh)"/>
<path d="M1001.6 500.0V166.3H1155.4V500.0M995.6 494.0H1155.4" fill="none" stroke="#909090" stroke-width="1.6"/>
<text transform="translate(1078.6,511.8) scale(0.86,1)" font-size="18" fill="#dcdcdc" text-anchor="middle">100%</text>
<text transform="translate(1063.9,160.4) scale(0.88,1)" font-size="17" fill="#dcdcdc" text-anchor="middle">DeltaH</text>
<rect x="547.30" y="524.00" width="628.70" height="187.70" fill="#000"/>
<rect x="570.00" y="532.30" width="105.30" height="152.40" fill="#f4f4f4"/>
<rect x="571.20" y="533.50" width="102.90" height="75.00" fill="#b0c4a8"/>
<rect x="571.20" y="608.50" width="102.90" height="75.00" fill="#c0c0a4"/>
<text transform="translate(622.6,702.0) scale(0.88,1)" font-size="15" fill="#fff" text-anchor="middle">20%</text>
<rect x="692.67" y="532.30" width="105.30" height="152.40" fill="#f4f4f4"/>
<rect x="693.87" y="533.50" width="102.90" height="75.00" fill="#b0c488"/>
<rect x="693.87" y="608.50" width="102.90" height="75.00" fill="#c2c088"/>
<text transform="translate(745.3,702.0) scale(0.88,1)" font-size="15" fill="#fff" text-anchor="middle">40%</text>
<rect x="815.34" y="532.30" width="105.30" height="152.40" fill="#f4f4f4"/>
<rect x="816.54" y="533.50" width="102.90" height="75.00" fill="#b0c46a"/>
<rect x="816.54" y="608.50" width="102.90" height="75.00" fill="#c2be6c"/>
<text transform="translate(867.9,702.0) scale(0.88,1)" font-size="15" fill="#fff" text-anchor="middle">60%</text>
<rect x="938.01" y="532.30" width="105.30" height="152.40" fill="#f4f4f4"/>
<rect x="939.21" y="533.50" width="102.90" height="75.00" fill="#aec23c"/>
<rect x="939.21" y="608.50" width="102.90" height="75.00" fill="#c2be4c"/>
<text transform="translate(990.6,702.0) scale(0.88,1)" font-size="15" fill="#fff" text-anchor="middle">80%</text>
<rect x="1060.68" y="532.30" width="105.30" height="152.40" fill="#f4f4f4"/>
<rect x="1061.88" y="533.50" width="102.90" height="75.00" fill="#b8c800"/>
<rect x="1061.88" y="608.50" width="102.90" height="75.00" fill="#c4c24c"/>
<text transform="translate(1113.3,702.0) scale(0.88,1)" font-size="15" fill="#fff" text-anchor="middle">100%</text>
<text transform="translate(561.8,565.5) rotate(-90) scale(0.9,1)" font-size="15.5" fill="#fff" text-anchor="middle">Actual</text>
<text transform="translate(561.8,651) rotate(-90) scale(0.9,1)" font-size="15.5" fill="#fff" text-anchor="middle">Target</text>
<rect x="525.40" y="771.90" width="268.50" height="208.50" fill="#222"/>
<line x1="519.40" y1="813.50" x2="793.90" y2="813.50" stroke="#909090" stroke-width="1.5"/>
<line x1="519.40" y1="877.80" x2="793.90" y2="877.80" stroke="#909090" stroke-width="1.5"/>
<line x1="519.40" y1="943.90" x2="793.90" y2="943.90" stroke="#909090" stroke-width="1.5"/>
<rect x="551.80" y="877.00" width="72.30" height="26.80" fill="#000"/>
<rect x="553.00" y="878.20" width="69.90" height="24.30" fill="url(#gr)"/>
<rect x="623.90" y="868.80" width="72.50" height="9.80" fill="#000"/>
<rect x="625.10" y="870.00" width="70.10" height="7.30" fill="url(#gg)"/>
<rect x="695.90" y="877.00" width="72.90" height="99.20" fill="#000"/>
<rect x="697.10" y="878.20" width="70.50" height="96.70" fill="url(#gb)"/>
<path d="M525.4 987.4V771.9H793.9V987.4M525.4 980.4H793.9" fill="none" stroke="#909090" stroke-width="1.6"/>
<text transform="translate(518.6,820.1) scale(0.86,1)" font-size="18" fill="#dcdcdc" text-anchor="end">50</text>
<text transform="translate(518.6,884.4) scale(0.86,1)" font-size="18" fill="#dcdcdc" text-anchor="end">0</text>
<text transform="translate(518.6,950.5) scale(0.86,1)" font-size="18" fill="#dcdcdc" text-anchor="end">-50</text>
<text transform="translate(645.1,766.6) scale(0.88,1)" font-size="17" fill="#dcdcdc" text-anchor="middle">RGB Balance</text>
<text transform="translate(659.4,1000.3) scale(0.86,1)" font-size="18" fill="#dcdcdc" text-anchor="middle">100%</text>
<text x="157.4" y="124.0" font-size="46.8" fill="#f0f0f0" textLength="353.6" lengthAdjust="spacingAndGlyphs">Saturation Sweeps</text>
<text x="281.8" y="186.0" font-size="21.7" fill="#f0f0f0" textLength="114.5" lengthAdjust="spacingAndGlyphs">dE Formula:</text>
<text x="743.7" y="115.2" font-size="21.7" fill="#f0f0f0" textLength="63.4" lengthAdjust="spacingAndGlyphs">Levels:</text>
<text x="204.1" y="764.7" font-size="32.2" fill="#f0f0f0" textLength="246.7" lengthAdjust="spacingAndGlyphs">Avg dE2000: 3.98</text>
<text x="199.5" y="811.8" font-size="32.2" fill="#f0f0f0" textLength="256.2" lengthAdjust="spacingAndGlyphs">Max dE2000: 8.17</text>
<text x="165.7" y="866.5" font-size="33" fill="#f0f0f0" textLength="232.0" lengthAdjust="spacingAndGlyphs">Current Reading</text>
<text x="165.7" y="908.4" font-size="27" fill="#f0f0f0" textLength="108.2" lengthAdjust="spacingAndGlyphs">x: 0.4138</text>
<text x="331.4" y="908.4" font-size="27" fill="#f0f0f0" textLength="108.9" lengthAdjust="spacingAndGlyphs">y: 0.5492</text>
<text x="165.7" y="955.5" font-size="27" fill="#f0f0f0" textLength="101.2" lengthAdjust="spacingAndGlyphs">fL: 56.31</text>
<text x="165.7" y="994.6" font-size="27" fill="#f0f0f0" textLength="168.2" lengthAdjust="spacingAndGlyphs">cd/m²: 192.95</text>
<rect x="403.80" y="162.30" width="143.00" height="29.50" fill="url(#dd2)" stroke="#272727" stroke-width="1.5"/>
<text x="410.0" y="185.5" font-size="17.6" fill="#f0f0f0" textLength="37.5" lengthAdjust="spacingAndGlyphs">2000</text>
<path d="M530.3 175l5.4 6.2 5.4-6.2z" fill="#000"/>
<rect x="815.00" y="90.80" width="360.60" height="29.90" fill="url(#dd)" stroke="#272727" stroke-width="1.5"/>
<clipPath id="cl1"><rect x="816" y="92" width="340" height="25"/></clipPath>
<text x="821.0" y="115.5" font-size="17.8" fill="#f0f0f0" textLength="94.5" lengthAdjust="spacingAndGlyphs" clip-path="url(#cl1)">20% Sweeps</text>
<path d="M1158.6 103.9l5.4 6.6 5.4-6.6z" fill="#000"/>
<rect x="817.20" y="737.50" width="764.40" height="32.50" fill="url(#th)"/>
<rect x="817.20" y="737.50" width="20.60" height="32.50" fill="#000"/>
<text transform="translate(1014.3,760.2) scale(1.27,1)" font-size="16.3" fill="#f4f4f4" text-anchor="start">20%</text>
<text transform="translate(1129.0,760.2) scale(1.27,1)" font-size="16.3" fill="#f4f4f4" text-anchor="start">40%</text>
<text transform="translate(1243.9,760.2) scale(1.27,1)" font-size="16.3" fill="#f4f4f4" text-anchor="start">60%</text>
<text transform="translate(1358.6,760.2) scale(1.27,1)" font-size="16.3" fill="#f4f4f4" text-anchor="start">80%</text>
<text transform="translate(1473.6,760.2) scale(1.27,1)" font-size="16.3" fill="#f4f4f4" text-anchor="start">100%</text>
<rect x="837.80" y="770.00" width="743.80" height="29.95" fill="#404040"/>
<rect x="817.20" y="770.00" width="20.60" height="29.95" fill="url(#tg)"/>
<text x="844.6" y="791.8" font-size="18.4" fill="#f2f2f2" textLength="83.1" lengthAdjust="spacingAndGlyphs">x: CIE31</text>
<text transform="translate(1014.3,791.8) scale(1.27,1)" font-size="18.4" fill="#f2f2f2" text-anchor="start">0.3185</text>
<text transform="translate(1129.0,791.8) scale(1.27,1)" font-size="18.4" fill="#f2f2f2" text-anchor="start">0.3417</text>
<text transform="translate(1243.9,791.8) scale(1.27,1)" font-size="18.4" fill="#f2f2f2" text-anchor="start">0.3651</text>
<text transform="translate(1358.6,791.8) scale(1.27,1)" font-size="18.4" fill="#f2f2f2" text-anchor="start">0.3860</text>
<text transform="translate(1473.6,791.8) scale(1.27,1)" font-size="18.4" fill="#f2f2f2" text-anchor="start">0.4138</text>
<rect x="837.80" y="799.85" width="743.80" height="29.95" fill="#808080"/>
<rect x="817.20" y="799.85" width="20.60" height="29.95" fill="url(#tg)"/>
<text x="844.6" y="821.6" font-size="18.4" fill="#ececec" textLength="83.1" lengthAdjust="spacingAndGlyphs">y: CIE31</text>
<text transform="translate(1014.3,821.6) scale(1.27,1)" font-size="18.4" fill="#ececec" text-anchor="start">0.3650</text>
<text transform="translate(1129.0,821.6) scale(1.27,1)" font-size="18.4" fill="#ececec" text-anchor="start">0.4100</text>
<text transform="translate(1243.9,821.6) scale(1.27,1)" font-size="18.4" fill="#ececec" text-anchor="start">0.4554</text>
<text transform="translate(1358.6,821.6) scale(1.27,1)" font-size="18.4" fill="#ececec" text-anchor="start">0.4960</text>
<text transform="translate(1473.6,821.6) scale(1.27,1)" font-size="18.4" fill="#ececec" text-anchor="start">0.5492</text>
<rect x="837.80" y="829.70" width="743.80" height="29.95" fill="#404040"/>
<rect x="817.20" y="829.70" width="20.60" height="29.95" fill="url(#tg)"/>
<text x="844.6" y="851.5" font-size="18.4" fill="#f2f2f2" textLength="12.6" lengthAdjust="spacingAndGlyphs">Y</text>
<text transform="translate(1014.3,851.5) scale(1.27,1)" font-size="18.4" fill="#f2f2f2" text-anchor="start">204.3929</text>
<text transform="translate(1129.0,851.5) scale(1.27,1)" font-size="18.4" fill="#f2f2f2" text-anchor="start">200.8349</text>
<text transform="translate(1243.9,851.5) scale(1.27,1)" font-size="18.4" fill="#f2f2f2" text-anchor="start">197.9915</text>
<text transform="translate(1358.6,851.5) scale(1.27,1)" font-size="18.4" fill="#f2f2f2" text-anchor="start">195.9599</text>
<text transform="translate(1473.6,851.5) scale(1.27,1)" font-size="18.4" fill="#f2f2f2" text-anchor="start">192.9459</text>
<rect x="837.80" y="859.55" width="743.80" height="29.95" fill="#808080"/>
<rect x="817.20" y="859.55" width="20.60" height="29.95" fill="url(#tg)"/>
<text x="844.6" y="881.3" font-size="18.4" fill="#ececec" textLength="152.3" lengthAdjust="spacingAndGlyphs">Target x:CIE31</text>
<text transform="translate(1014.3,881.3) scale(1.27,1)" font-size="18.4" fill="#ececec" text-anchor="start">0.3344</text>
<text transform="translate(1129.0,881.3) scale(1.27,1)" font-size="18.4" fill="#ececec" text-anchor="start">0.3564</text>
<text transform="translate(1243.9,881.3) scale(1.27,1)" font-size="18.4" fill="#ececec" text-anchor="start">0.3773</text>
<text transform="translate(1358.6,881.3) scale(1.27,1)" font-size="18.4" fill="#ececec" text-anchor="start">0.3969</text>
<text transform="translate(1473.6,881.3) scale(1.27,1)" font-size="18.4" fill="#ececec" text-anchor="start">0.4193</text>
<rect x="837.80" y="889.40" width="743.80" height="29.95" fill="#404040"/>
<rect x="817.20" y="889.40" width="20.60" height="29.95" fill="url(#tg)"/>
<text x="844.6" y="911.2" font-size="18.4" fill="#f2f2f2" textLength="152.3" lengthAdjust="spacingAndGlyphs">Target y:CIE31</text>
<text transform="translate(1014.3,911.2) scale(1.27,1)" font-size="18.4" fill="#f2f2f2" text-anchor="start">0.3648</text>
<text transform="translate(1129.0,911.2) scale(1.27,1)" font-size="18.4" fill="#f2f2f2" text-anchor="start">0.4013</text>
<text transform="translate(1243.9,911.2) scale(1.27,1)" font-size="18.4" fill="#f2f2f2" text-anchor="start">0.4358</text>
<text transform="translate(1358.6,911.2) scale(1.27,1)" font-size="18.4" fill="#f2f2f2" text-anchor="start">0.4682</text>
<text transform="translate(1473.6,911.2) scale(1.27,1)" font-size="18.4" fill="#f2f2f2" text-anchor="start">0.5053</text>
<rect x="837.80" y="919.25" width="743.80" height="29.95" fill="#808080"/>
<rect x="817.20" y="919.25" width="20.60" height="29.95" fill="url(#tg)"/>
<text x="844.6" y="941.0" font-size="18.4" fill="#ececec" textLength="87.2" lengthAdjust="spacingAndGlyphs">Target Y</text>
<text transform="translate(1014.3,941.0) scale(1.27,1)" font-size="18.4" fill="#ececec" text-anchor="start">204.5449</text>
<text transform="translate(1129.0,941.0) scale(1.27,1)" font-size="18.4" fill="#ececec" text-anchor="start">200.9546</text>
<text transform="translate(1243.9,941.0) scale(1.27,1)" font-size="18.4" fill="#ececec" text-anchor="start">198.1959</text>
<text transform="translate(1358.6,941.0) scale(1.27,1)" font-size="18.4" fill="#ececec" text-anchor="start">196.0309</text>
<text transform="translate(1473.6,941.0) scale(1.27,1)" font-size="18.4" fill="#ececec" text-anchor="start">193.9378</text>
<rect x="837.80" y="949.10" width="743.80" height="29.95" fill="#404040"/>
<rect x="817.20" y="949.10" width="20.60" height="29.95" fill="url(#tg)"/>
<text x="844.6" y="970.9" font-size="18.4" fill="#f2f2f2" textLength="88.5" lengthAdjust="spacingAndGlyphs">ΔE 2000</text>
<text transform="translate(1014.3,970.9) scale(1.27,1)" font-size="18.4" fill="#f2f2f2" text-anchor="start">6.7178</text>
<text transform="translate(1129.0,970.9) scale(1.27,1)" font-size="18.4" fill="#f2f2f2" text-anchor="start">5.4799</text>
<text transform="translate(1243.9,970.9) scale(1.27,1)" font-size="18.4" fill="#f2f2f2" text-anchor="start">5.2562</text>
<text transform="translate(1358.6,970.9) scale(1.27,1)" font-size="18.4" fill="#f2f2f2" text-anchor="start">5.0987</text>
<text transform="translate(1473.6,970.9) scale(1.27,1)" font-size="18.4" fill="#f2f2f2" text-anchor="start">5.3051</text>
<rect x="837.80" y="978.95" width="743.80" height="29.95" fill="#808080"/>
<rect x="817.20" y="978.95" width="20.60" height="29.95" fill="url(#tg)"/>
<text x="844.6" y="1000.8" font-size="18.4" fill="#ececec" textLength="60.5" lengthAdjust="spacingAndGlyphs">dEITP</text>
<text transform="translate(1014.3,1000.8) scale(1.27,1)" font-size="18.4" fill="#ececec" text-anchor="start">9.9848</text>
<text transform="translate(1129.0,1000.8) scale(1.27,1)" font-size="18.4" fill="#ececec" text-anchor="start">10.3987</text>
<text transform="translate(1243.9,1000.8) scale(1.27,1)" font-size="18.4" fill="#ececec" text-anchor="start">11.9742</text>
<text transform="translate(1358.6,1000.8) scale(1.27,1)" font-size="18.4" fill="#ececec" text-anchor="start">14.6895</text>
<text transform="translate(1473.6,1000.8) scale(1.27,1)" font-size="18.4" fill="#ececec" text-anchor="start">26.7482</text>
<path d="M1230 687.5V117H1910V686.5H1224" fill="none" stroke="#909090" stroke-width="2"/>
<text transform="translate(1222.5,693.1) scale(0.87,1)" font-size="18" fill="#dcdcdc" text-anchor="end">0</text>
<line x1="1230.10" y1="686.50" x2="1230.10" y2="694.00" stroke="#b0b0b0" stroke-width="1.8"/>
<text transform="translate(1230.1,713.3) scale(0.87,1)" font-size="18" fill="#dcdcdc" text-anchor="middle">0</text>
<line x1="1223.50" y1="639.21" x2="1230.00" y2="639.21" stroke="#d0d0d0" stroke-width="2.2"/>
<text transform="translate(1222.5,645.8) scale(0.87,1)" font-size="18" fill="#dcdcdc" text-anchor="end">0.05</text>
<line x1="1286.60" y1="686.50" x2="1286.60" y2="694.00" stroke="#b0b0b0" stroke-width="1.8"/>
<text transform="translate(1286.6,713.3) scale(0.87,1)" font-size="18" fill="#dcdcdc" text-anchor="middle">0.05</text>
<line x1="1223.50" y1="591.92" x2="1230.00" y2="591.92" stroke="#d0d0d0" stroke-width="2.2"/>
<text transform="translate(1222.5,598.5) scale(0.87,1)" font-size="18" fill="#dcdcdc" text-anchor="end">0.1</text>
<line x1="1343.10" y1="686.50" x2="1343.10" y2="694.00" stroke="#b0b0b0" stroke-width="1.8"/>
<text transform="translate(1343.1,713.3) scale(0.87,1)" font-size="18" fill="#dcdcdc" text-anchor="middle">0.1</text>
<line x1="1223.50" y1="544.63" x2="1230.00" y2="544.63" stroke="#d0d0d0" stroke-width="2.2"/>
<text transform="translate(1222.5,551.2) scale(0.87,1)" font-size="18" fill="#dcdcdc" text-anchor="end">0.15</text>
<line x1="1399.60" y1="686.50" x2="1399.60" y2="694.00" stroke="#b0b0b0" stroke-width="1.8"/>
<text transform="translate(1399.6,713.3) scale(0.87,1)" font-size="18" fill="#dcdcdc" text-anchor="middle">0.15</text>
<line x1="1223.50" y1="497.34" x2="1230.00" y2="497.34" stroke="#d0d0d0" stroke-width="2.2"/>
<text transform="translate(1222.5,503.9) scale(0.87,1)" font-size="18" fill="#dcdcdc" text-anchor="end">0.2</text>
<line x1="1456.10" y1="686.50" x2="1456.10" y2="694.00" stroke="#b0b0b0" stroke-width="1.8"/>
<text transform="translate(1456.1,713.3) scale(0.87,1)" font-size="18" fill="#dcdcdc" text-anchor="middle">0.2</text>
<line x1="1223.50" y1="450.05" x2="1230.00" y2="450.05" stroke="#d0d0d0" stroke-width="2.2"/>
<text transform="translate(1222.5,456.7) scale(0.87,1)" font-size="18" fill="#dcdcdc" text-anchor="end">0.25</text>
<line x1="1512.60" y1="686.50" x2="1512.60" y2="694.00" stroke="#b0b0b0" stroke-width="1.8"/>
<text transform="translate(1512.6,713.3) scale(0.87,1)" font-size="18" fill="#dcdcdc" text-anchor="middle">0.25</text>
<line x1="1223.50" y1="402.76" x2="1230.00" y2="402.76" stroke="#d0d0d0" stroke-width="2.2"/>
<text transform="translate(1222.5,409.4) scale(0.87,1)" font-size="18" fill="#dcdcdc" text-anchor="end">0.3</text>
<line x1="1569.10" y1="686.50" x2="1569.10" y2="694.00" stroke="#b0b0b0" stroke-width="1.8"/>
<text transform="translate(1569.1,713.3) scale(0.87,1)" font-size="18" fill="#dcdcdc" text-anchor="middle">0.3</text>
<line x1="1223.50" y1="355.47" x2="1230.00" y2="355.47" stroke="#d0d0d0" stroke-width="2.2"/>
<text transform="translate(1222.5,362.1) scale(0.87,1)" font-size="18" fill="#dcdcdc" text-anchor="end">0.35</text>
<line x1="1625.60" y1="686.50" x2="1625.60" y2="694.00" stroke="#b0b0b0" stroke-width="1.8"/>
<text transform="translate(1625.6,713.3) scale(0.87,1)" font-size="18" fill="#dcdcdc" text-anchor="middle">0.35</text>
<line x1="1223.50" y1="308.18" x2="1230.00" y2="308.18" stroke="#d0d0d0" stroke-width="2.2"/>
<text transform="translate(1222.5,314.8) scale(0.87,1)" font-size="18" fill="#dcdcdc" text-anchor="end">0.4</text>
<line x1="1682.10" y1="686.50" x2="1682.10" y2="694.00" stroke="#b0b0b0" stroke-width="1.8"/>
<text transform="translate(1682.1,713.3) scale(0.87,1)" font-size="18" fill="#dcdcdc" text-anchor="middle">0.4</text>
<line x1="1223.50" y1="260.89" x2="1230.00" y2="260.89" stroke="#d0d0d0" stroke-width="2.2"/>
<text transform="translate(1222.5,267.5) scale(0.87,1)" font-size="18" fill="#dcdcdc" text-anchor="end">0.45</text>
<line x1="1738.60" y1="686.50" x2="1738.60" y2="694.00" stroke="#b0b0b0" stroke-width="1.8"/>
<text transform="translate(1738.6,713.3) scale(0.87,1)" font-size="18" fill="#dcdcdc" text-anchor="middle">0.45</text>
<line x1="1223.50" y1="213.60" x2="1230.00" y2="213.60" stroke="#d0d0d0" stroke-width="2.2"/>
<text transform="translate(1222.5,220.2) scale(0.87,1)" font-size="18" fill="#dcdcdc" text-anchor="end">0.5</text>
<line x1="1795.10" y1="686.50" x2="1795.10" y2="694.00" stroke="#b0b0b0" stroke-width="1.8"/>
<text transform="translate(1795.1,713.3) scale(0.87,1)" font-size="18" fill="#dcdcdc" text-anchor="middle">0.5</text>
<line x1="1223.50" y1="166.31" x2="1230.00" y2="166.31" stroke="#d0d0d0" stroke-width="2.2"/>
<text transform="translate(1222.5,172.9) scale(0.87,1)" font-size="18" fill="#dcdcdc" text-anchor="end">0.55</text>
<line x1="1851.60" y1="686.50" x2="1851.60" y2="694.00" stroke="#b0b0b0" stroke-width="1.8"/>
<text transform="translate(1851.6,713.3) scale(0.87,1)" font-size="18" fill="#dcdcdc" text-anchor="middle">0.55</text>
<text transform="translate(1550.5,111.2) scale(0.88,1)" font-size="17" fill="#dcdcdc" text-anchor="middle">CIE 1976 u'v'</text>
<rect x="1498.2" y="224.8" width="13.6" height="15.2" fill="none" stroke="#fff" stroke-width="1.7"/>
<rect x="1554.3" y="213.5" width="13.6" height="15.2" fill="none" stroke="#fff" stroke-width="1.7"/>
<rect x="1606.1" y="205.9" width="13.6" height="15.2" fill="none" stroke="#fff" stroke-width="1.7"/>
<rect x="1663.9" y="194.7" width="13.6" height="15.2" fill="none" stroke="#fff" stroke-width="1.7"/>
<rect x="1731.8" y="182.4" width="13.6" height="15.2" fill="none" stroke="#fff" stroke-width="1.7"/>
<rect x="1424.1" y="209.0" width="13.6" height="15.2" fill="none" stroke="#fff" stroke-width="1.7"/>
<rect x="1405.5" y="190.0" width="13.6" height="15.2" fill="none" stroke="#fff" stroke-width="1.7"/>
<rect x="1389.3" y="172.8" width="13.6" height="15.2" fill="none" stroke="#fff" stroke-width="1.7"/>
<rect x="1376.7" y="158.2" width="13.6" height="15.2" fill="none" stroke="#fff" stroke-width="1.7"/>
<rect x="1364.1" y="144.1" width="13.6" height="15.2" fill="none" stroke="#fff" stroke-width="1.7"/>
<rect x="1442.8" y="269.0" width="13.6" height="15.2" fill="none" stroke="#fff" stroke-width="1.7"/>
<rect x="1440.1" y="311.7" width="13.6" height="15.2" fill="none" stroke="#fff" stroke-width="1.7"/>
<rect x="1435.9" y="363.4" width="13.6" height="15.2" fill="none" stroke="#fff" stroke-width="1.7"/>
<rect x="1430.1" y="429.4" width="13.6" height="15.2" fill="none" stroke="#fff" stroke-width="1.7"/>
<rect x="1421.6" y="528.6" width="13.6" height="15.2" fill="none" stroke="#fff" stroke-width="1.7"/>
<rect x="1433.0" y="236.5" width="13.6" height="15.2" fill="none" stroke="#fff" stroke-width="1.7"/>
<rect x="1419.8" y="238.5" width="13.6" height="15.2" fill="none" stroke="#fff" stroke-width="1.7"/>
<rect x="1405.4" y="241.4" width="13.6" height="15.2" fill="none" stroke="#fff" stroke-width="1.7"/>
<rect x="1392.1" y="243.2" width="13.6" height="15.2" fill="none" stroke="#fff" stroke-width="1.7"/>
<rect x="1379.3" y="246.7" width="13.6" height="15.2" fill="none" stroke="#fff" stroke-width="1.7"/>
<rect x="1464.3" y="253.0" width="13.6" height="15.2" fill="none" stroke="#fff" stroke-width="1.7"/>
<rect x="1484.6" y="274.8" width="13.6" height="15.2" fill="none" stroke="#fff" stroke-width="1.7"/>
<rect x="1504.8" y="298.7" width="13.6" height="15.2" fill="none" stroke="#fff" stroke-width="1.7"/>
<rect x="1532.7" y="328.9" width="13.6" height="15.2" fill="none" stroke="#fff" stroke-width="1.7"/>
<rect x="1567.2" y="364.9" width="13.6" height="15.2" fill="none" stroke="#fff" stroke-width="1.7"/>
<rect x="1447.9" y="214.0" width="13.6" height="15.2" fill="none" stroke="#fff" stroke-width="1.7"/>
<rect x="1449.4" y="195.8" width="13.6" height="15.2" fill="none" stroke="#fff" stroke-width="1.7"/>
<rect x="1450.7" y="180.5" width="13.6" height="15.2" fill="none" stroke="#fff" stroke-width="1.7"/>
<rect x="1451.9" y="167.3" width="13.6" height="15.2" fill="none" stroke="#fff" stroke-width="1.7"/>
<rect x="1453.0" y="153.7" width="13.6" height="15.2" fill="none" stroke="#fff" stroke-width="1.7"/>
<ellipse cx="1484.2" cy="237.0" rx="4.0" ry="4.5" fill="#be8787" stroke="#000" stroke-width="1.2"/>
<ellipse cx="1534.8" cy="226.2" rx="4.0" ry="4.5" fill="#be6164" stroke="#000" stroke-width="1.2"/>
<ellipse cx="1581.0" cy="215.0" rx="4.0" ry="4.5" fill="#be4d50" stroke="#000" stroke-width="1.2"/>
<ellipse cx="1647.3" cy="199.3" rx="4.0" ry="4.5" fill="#c33e41" stroke="#000" stroke-width="1.2"/>
<ellipse cx="1719.7" cy="183.3" rx="4.0" ry="4.5" fill="#be0000" stroke="#000" stroke-width="1.2"/>
<ellipse cx="1423.9" cy="217.7" rx="4.0" ry="4.5" fill="#9bb996" stroke="#000" stroke-width="1.2"/>
<ellipse cx="1407.9" cy="193.0" rx="4.0" ry="4.5" fill="#82b97d" stroke="#000" stroke-width="1.2"/>
<ellipse cx="1395.1" cy="173.9" rx="4.0" ry="4.5" fill="#69b969" stroke="#000" stroke-width="1.2"/>
<ellipse cx="1383.6" cy="158.4" rx="4.0" ry="4.5" fill="#4bb950" stroke="#000" stroke-width="1.2"/>
<ellipse cx="1371.9" cy="142.4" rx="4.0" ry="4.5" fill="#00b900" stroke="#000" stroke-width="1.2"/>
<ellipse cx="1444.2" cy="282.1" rx="4.0" ry="4.5" fill="#9696be" stroke="#000" stroke-width="1.2"/>
<ellipse cx="1444.2" cy="331.1" rx="4.0" ry="4.5" fill="#7d7dc3" stroke="#000" stroke-width="1.2"/>
<ellipse cx="1444.2" cy="388.3" rx="4.0" ry="4.5" fill="#6464c8" stroke="#000" stroke-width="1.2"/>
<ellipse cx="1444.2" cy="454.5" rx="4.0" ry="4.5" fill="#4b4bc8" stroke="#000" stroke-width="1.2"/>
<ellipse cx="1445.1" cy="556.8" rx="4.0" ry="4.5" fill="#0000c8" stroke="#000" stroke-width="1.2"/>
<ellipse cx="1432.2" cy="247.9" rx="4.0" ry="4.5" fill="#a5beb9" stroke="#000" stroke-width="1.2"/>
<ellipse cx="1422.3" cy="249.4" rx="4.0" ry="4.5" fill="#96beb9" stroke="#000" stroke-width="1.2"/>
<ellipse cx="1412.2" cy="252.9" rx="4.0" ry="4.5" fill="#78beb9" stroke="#000" stroke-width="1.2"/>
<ellipse cx="1402.1" cy="254.4" rx="4.0" ry="4.5" fill="#5fbebe" stroke="#000" stroke-width="1.2"/>
<ellipse cx="1391.9" cy="257.6" rx="4.0" ry="4.5" fill="#00bebe" stroke="#000" stroke-width="1.2"/>
<ellipse cx="1458.1" cy="266.6" rx="4.0" ry="4.5" fill="#be96b9" stroke="#000" stroke-width="1.2"/>
<ellipse cx="1477.2" cy="295.4" rx="4.0" ry="4.5" fill="#be7db9" stroke="#000" stroke-width="1.2"/>
<ellipse cx="1495.6" cy="323.5" rx="4.0" ry="4.5" fill="#c364be" stroke="#000" stroke-width="1.2"/>
<ellipse cx="1520.4" cy="358.0" rx="4.0" ry="4.5" fill="#c84bc3" stroke="#000" stroke-width="1.2"/>
<ellipse cx="1554.9" cy="408.2" rx="4.0" ry="4.5" fill="#cd00c8" stroke="#000" stroke-width="1.2"/>
<ellipse cx="1442.7" cy="224.3" rx="4.0" ry="4.5" fill="#bebc9b" stroke="#000" stroke-width="1.2"/>
<ellipse cx="1442.7" cy="202.2" rx="4.0" ry="4.5" fill="#c0bc87" stroke="#000" stroke-width="1.2"/>
<ellipse cx="1442.7" cy="183.4" rx="4.0" ry="4.5" fill="#c0bc73" stroke="#000" stroke-width="1.2"/>
<ellipse cx="1442.7" cy="167.7" rx="4.0" ry="4.5" fill="#c3be5a" stroke="#000" stroke-width="1.2"/>
<ellipse cx="1442.7" cy="150.3" rx="4.0" ry="4.5" fill="#c8be00" stroke="#000" stroke-width="1.2"/>
<rect x="1445.9" y="234.3" width="13" height="15.2" fill="none" stroke="#000" stroke-width="2"/>
<ellipse cx="1442.7" cy="247.9" rx="4.0" ry="4.5" fill="#fff" stroke="#000" stroke-width="1.2"/>
<rect x="1675.00" y="509.30" width="229.00" height="170.40" fill="none" stroke="#2c2c2c" stroke-width="3"/>
<rect x="1677.20" y="511.50" width="224.60" height="166.00" fill="none" stroke="#8a8a8a" stroke-width="1.4"/>
<rect x="1781.6" y="585.4" width="13.6" height="15.2" fill="none" stroke="#fff" stroke-width="1.7"/>
<rect x="1729.8" y="648.8" width="13.6" height="15.2" fill="none" stroke="#fff" stroke-width="1.7"/>
<ellipse cx="1775.4" cy="519.5" rx="4.0" ry="4.5" fill="#c8c000" stroke="#000" stroke-width="1.2"/>
<ellipse cx="1712.2" cy="609.4" rx="4.0" ry="4.5" fill="#bebe58" stroke="#000" stroke-width="1.2"/>
<circle cx="8.2" cy="8.4" r="5.9" fill="#101010"/><circle cx="8.2" cy="8.4" r="5.6" fill="none" stroke="url(#rb)" stroke-width=".9" opacity=".8"/>
<text x="8.2" y="10.3" font-size="5.2" font-weight="bold" fill="#fff" text-anchor="middle">CM</text>
<text x="17.6" y="12.2" font-size="9.2" fill="#0a0a0a" textLength="256.5" lengthAdjust="spacingAndGlyphs" stroke="#0a0a0a" stroke-width=".15">CalMAN 2019 CalMAN Ultimate for Business 151 Days Remaining</text>
<path d="M1829 7.8h8.5" stroke="#111" stroke-width="1.1"/><path d="M1862.8 5.6h6.2v6.2h-6.2zM1864.8 5.4v-1.9h6.2v6.2h-1.9" fill="none" stroke="#111" stroke-width="1"/><path d="M1897 3.4l8.4 8.4M1905.4 3.4l-8.4 8.4" stroke="#111" stroke-width="1.1"/>
<path d="M0.8 16.6H137.2V35.5Q137.2 39.3 133.4 39.3H4.6Q0.8 39.3 0.8 35.5Z" fill="url(#cm)" stroke="#6e1014" stroke-width="1"/>
<text x="10.0" y="36.0" font-size="22.5" fill="#fff" textLength="97.0" lengthAdjust="spacingAndGlyphs" font-weight="bold">CalMAN</text>
<circle cx="124.2" cy="28" r="7.4" fill="#e2464a" stroke="#b8141a" stroke-width="1"/><path d="M120.6 26.3h7.2l-3.6 4.2z" fill="#fff"/>
<rect x="142.00" y="27.30" width="1778.00" height="3.20" fill="url(#rb)"/>
<circle cx="14.1" cy="54.2" r="7" fill="#626262"/><circle cx="14.1" cy="54.2" r="7" fill="none" stroke="#505050" stroke-width=".8"/><circle cx="13.8" cy="53.6" r="2.5" fill="#a8a8a8"/>
<circle cx="136" cy="54.4" r="7" fill="#626262"/><path d="M133.4 53.6l4.2-4.2v8.4z" fill="#fff"/>
<text x="6.7" y="75.8" font-size="10.6" fill="#f4f4f4" textLength="47.7" lengthAdjust="spacingAndGlyphs">SDR Toolkit</text>
<text transform="translate(21.7,93.0) scale(0.93,1)" font-size="8.7" fill="#fff" text-anchor="start" font-weight="bold">Welcome</text>
<path d="M14.2 91.5l2.2 -2.2v2.2z" fill="#555"/>
<text transform="translate(31.2,105.0) scale(0.9,1)" font-size="8.9" fill="#fff" text-anchor="start" stroke="#fff" stroke-width=".25">Welcome</text>
<text transform="translate(31.2,116.0) scale(0.9,1)" font-size="8.9" fill="#fff" text-anchor="start" stroke="#fff" stroke-width=".25">Options</text>
<text transform="translate(21.7,127.0) scale(0.93,1)" font-size="8.7" fill="#fff" text-anchor="start" font-weight="bold">Analysis</text>
<path d="M14.2 125.5l2.2 -2.2v2.2z" fill="#555"/>
<text transform="translate(31.2,139.0) scale(0.9,1)" font-size="8.9" fill="#fff" text-anchor="start" stroke="#fff" stroke-width=".25">Dynamic Range</text>
<text transform="translate(31.2,150.0) scale(0.9,1)" font-size="8.9" fill="#fff" text-anchor="start" stroke="#fff" stroke-width=".25">Grayscale - 2pt</text>
<text transform="translate(31.2,161.0) scale(0.9,1)" font-size="8.9" fill="#fff" text-anchor="start" stroke="#fff" stroke-width=".25">Grayscale - Multi</text>
<text transform="translate(31.2,172.0) scale(0.9,1)" font-size="8.9" fill="#fff" text-anchor="start" stroke="#fff" stroke-width=".25">Color Gamut</text>
<text transform="translate(31.2,183.0) scale(0.9,1)" font-size="8.9" fill="#fff" text-anchor="start" stroke="#fff" stroke-width=".25">3D LUT</text>
<text transform="translate(31.2,194.0) scale(0.9,1)" font-size="8.9" fill="#fff" text-anchor="start" stroke="#fff" stroke-width=".25">ColorChecker</text>
<rect x="30.40" y="196.40" width="68.20" height="10.80" fill="#f2f2f2"/>
<text transform="translate(31.2,205.0) scale(0.9,1)" font-size="8.9" fill="#333" text-anchor="start">Saturation Sweeps</text>
<text transform="translate(31.2,216.0) scale(0.9,1)" font-size="8.9" fill="#fff" text-anchor="start" stroke="#fff" stroke-width=".25">Luminance Sweeps</text>
<text transform="translate(31.2,227.0) scale(0.9,1)" font-size="8.9" fill="#fff" text-anchor="start" stroke="#fff" stroke-width=".25">Screen Uniformity</text>
<text transform="translate(31.2,238.0) scale(0.9,1)" font-size="8.9" fill="#fff" text-anchor="start" stroke="#fff" stroke-width=".25">Screen Angularity</text>
<text transform="translate(31.2,249.0) scale(0.9,1)" font-size="8.9" fill="#fff" text-anchor="start" stroke="#fff" stroke-width=".25">Screen Stability</text>
<text transform="translate(31.2,260.0) scale(0.9,1)" font-size="8.9" fill="#fff" text-anchor="start" stroke="#fff" stroke-width=".25">Spectral Power Dist.</text>
<text x="154.8" y="58.7" font-size="9" fill="#eee" textLength="34.6" lengthAdjust="spacingAndGlyphs">History 1</text>
<circle cx="205.4" cy="56.5" r="7" fill="#333"/><path d="M203 56.6h4.8M205.4 54.2v4.8" stroke="#8a8a8a" stroke-width=".9"/>
<path d="M1551 66.2V46.5Q1551 43.6 1554 43.6H1655.2Q1658.2 43.6 1658.2 46.5V66.2Z" fill="url(#wg)"/>
<rect x="1551.00" y="44.50" width="3.60" height="21.70" fill="#1ee01e"/>
<path d="M1662.4 66.2V46.5Q1662.4 43.6 1665.4 43.6H1756.8Q1759.8 43.6 1759.8 46.5V66.2Z" fill="url(#wg)"/>
<rect x="1662.40" y="44.50" width="3.60" height="21.70" fill="#ece800"/>
<path d="M1764.4 66.2V46.5Q1764.4 43.6 1767.4 43.6H1869.3Q1872.3 43.6 1872.3 46.5V66.2Z" fill="url(#wg)"/>
<rect x="1764.40" y="44.50" width="3.60" height="21.70" fill="#ece800"/>
<rect x="1631.00" y="45.00" width="1.00" height="21.00" fill="#444"/>
<text transform="translate(1557.2,52.6) scale(0.92,1)" font-size="8.8" fill="#fff" text-anchor="start" stroke="#fff" stroke-width=".25">X-Rite i1Pro 2</text>
<text transform="translate(1557.2,62.9) scale(0.92,1)" font-size="8.8" fill="#fff" text-anchor="start" stroke="#fff" stroke-width=".25">Direct View</text>
<text transform="translate(1669.0,52.6) scale(0.92,1)" font-size="8.8" fill="#fff" text-anchor="start" stroke="#fff" stroke-width=".25">Source</text>
<text transform="translate(1771.0,52.6) scale(0.93,1)" font-size="8.8" fill="#fff" text-anchor="start" stroke="#fff" stroke-width=".25">Direct Display Control</text>
<circle cx="1616.5" cy="55" r="6.8" fill="#585858"/><path d="M1613.1 53.6h6.8l-3.4 3.8z" fill="#fff"/>
<circle cx="1747.6" cy="55" r="6.8" fill="#585858"/><path d="M1744.1999999999998 53.6h6.8l-3.4 3.8z" fill="#fff"/>
<circle cx="1860" cy="55" r="6.8" fill="#585858"/><path d="M1856.6 53.6h6.8l-3.4 3.8z" fill="#fff"/>
<circle cx="1646.3" cy="54.8" r="9.4" fill="#0000f0" stroke="#d8d8ff" stroke-width=".9"/>
<text x="1646.3" y="57.6" font-size="6.9" font-weight="bold" fill="#fff" text-anchor="middle">237</text>
<rect x="1874.4" y="43.8" width="25" height="21" rx="3" fill="url(#bt)" stroke="#9a9a9a" stroke-width=".8"/>
<rect x="1899.8" y="43.8" width="25" height="21" rx="3" fill="url(#bt)" stroke="#9a9a9a" stroke-width=".8"/>
<circle cx="1887" cy="54.3" r="7" fill="#5a5a5a"/><circle cx="1887" cy="54.3" r="2.7" fill="none" stroke="#e8e8e8" stroke-width="1.3"/><circle cx="1887" cy="54.3" r="4.0" fill="none" stroke="#e8e8e8" stroke-width="1.4" stroke-dasharray="1.3 1.84"/>
<circle cx="1910.5" cy="54.3" r="7" fill="#5a5a5a"/><path d="M1907.8 54.3l4.2-4.2v8.4z" fill="#fff"/>
<path d="M150.8 1058V1014.5Q150.8 1011.5 153.8 1011.5H181.6Q184.6 1011.5 184.6 1014.5V1058Z" fill="url(#tb)"/>
<circle cx="167.9" cy="1018.3" r="5" fill="#5a5a5a"/><path d="M164.7 1019.9h6.4l-3.2-3.4z" fill="#1a1a1a"/>
<rect x="154.8" y="1031.3" width="26.2" height="22.2" rx="2" fill="#ffff00"/>
<path d="M188.75 1058V1014.5Q188.75 1011.5 191.75 1011.5H298.25Q301.25 1011.5 301.25 1014.5V1058Z" fill="url(#tb)" stroke="#9c9c9c" stroke-width=".6"/>
<rect x="193.25" y="1015.6" width="104.8" height="26.7" rx="2.2" fill="#c1c2a3"/>
<text transform="translate(245.1,1053.6) scale(0.92,1)" font-size="8.6" fill="#2e2e2e" text-anchor="middle" font-weight="bold">20%</text>
<path d="M302.81 1058V1014.5Q302.81 1011.5 305.81 1011.5H412.31Q415.31 1011.5 415.31 1014.5V1058Z" fill="url(#tb)" stroke="#9c9c9c" stroke-width=".6"/>
<rect x="307.31" y="1015.6" width="104.8" height="26.7" rx="2.2" fill="#c2c188"/>
<text transform="translate(359.1,1053.6) scale(0.92,1)" font-size="8.6" fill="#2e2e2e" text-anchor="middle" font-weight="bold">40%</text>
<path d="M416.87 1058V1014.5Q416.87 1011.5 419.87 1011.5H526.37Q529.37 1011.5 529.37 1014.5V1058Z" fill="url(#tb)" stroke="#9c9c9c" stroke-width=".6"/>
<rect x="421.37" y="1015.6" width="104.8" height="26.7" rx="2.2" fill="#c2c06a"/>
<text transform="translate(473.2,1053.6) scale(0.92,1)" font-size="8.6" fill="#2e2e2e" text-anchor="middle" font-weight="bold">60%</text>
<path d="M530.93 1058V1014.5Q530.93 1011.5 533.93 1011.5H640.43Q643.43 1011.5 643.43 1014.5V1058Z" fill="url(#tb)" stroke="#9c9c9c" stroke-width=".6"/>
<rect x="535.43" y="1015.6" width="104.8" height="26.7" rx="2.2" fill="#c2c250"/>
<text transform="translate(587.2,1053.6) scale(0.92,1)" font-size="8.6" fill="#2e2e2e" text-anchor="middle" font-weight="bold">80%</text>
<path d="M644.99 1058V1014.5Q644.99 1011.5 647.99 1011.5H754.49Q757.49 1011.5 757.49 1014.5V1058Z" fill="url(#tbs)"/>
<rect x="649.49" y="1015.6" width="104.8" height="26.7" rx="2.2" fill="#c5c200"/>
<text transform="translate(701.3,1053.6) scale(0.92,1)" font-size="8.6" fill="#fff" text-anchor="middle" font-weight="bold">100%</text>
<rect x="1677.8" y="1025" width="35.6" height="36" rx="3" fill="url(#tb)"/>
<rect x="1684.5" y="1031.5" width="21.5" height="21" rx="3" fill="#9a9a9a" stroke="#2a2a2a" stroke-width="1.4"/><rect x="1690" y="1037" width="10.5" height="10" fill="#000"/>
<rect x="1715" y="1012" width="169" height="21.8" rx="2" fill="url(#tb)"/>
<rect x="1748.50" y="1012.00" width="1.00" height="21.80" fill="#555"/>
<rect x="1782.80" y="1012.00" width="1.00" height="21.80" fill="#555"/>
<rect x="1816.40" y="1012.00" width="1.00" height="21.80" fill="#555"/>
<rect x="1850.00" y="1012.00" width="1.00" height="21.80" fill="#555"/>
<circle cx="1732" cy="1024.5" r="6.5" fill="#6a6a6a" opacity=".8"/>
<circle cx="1766" cy="1024.5" r="6.5" fill="#6a6a6a" opacity=".8"/>
<circle cx="1800" cy="1024.5" r="6.5" fill="#6a6a6a" opacity=".8"/>
<circle cx="1833.7" cy="1024.5" r="6.5" fill="#6a6a6a" opacity=".8"/>
<circle cx="1867.2" cy="1024.5" r="6.5" fill="#6a6a6a" opacity=".8"/>
<circle cx="1903" cy="1024.5" r="6.5" fill="#6a6a6a" opacity=".8"/>
<rect x="1715" y="1035.3" width="101" height="26" rx="3" fill="url(#nb)"/><rect x="1817" y="1035.3" width="101.4" height="26" rx="3" fill="url(#nb)"/>
<circle cx="1737.5" cy="1046" r="7" fill="#b4b4b4"/><circle cx="1898.4" cy="1046" r="7" fill="#b4b4b4"/>
<path d="M1737 1042.6l-3 3.4 3 3.4M1741 1042.6l-3 3.4 3 3.4M1896 1042.6l3 3.4-3 3.4M1900 1042.6l3 3.4-3 3.4" fill="none" stroke="#333" stroke-width="1.1"/>
<text x="1757.5" y="1051.0" font-size="15" fill="#222" textLength="37.5" lengthAdjust="spacingAndGlyphs">Back</text>
<text x="1838.0" y="1051.0" font-size="15" fill="#222" textLength="38.0" lengthAdjust="spacingAndGlyphs">Next</text>
<g opacity=".8"><path d="M1669.6 1025.6L1669.2 1005.2L1632.6 996.8L1634.6 1034.4L1657.5 1045.2L1696 1033" fill="none" stroke="#d8d0d0" stroke-width="5.8" stroke-linejoin="miter" opacity=".55"/><path d="M1669.6 1025.6L1669.2 1005.2L1632.6 996.8L1634.6 1034.4L1657.5 1045.2L1696 1033" fill="none" stroke="#8e2229" stroke-width="3.9" stroke-linejoin="miter"/><path d="M1640.6 1029.6L1670.6 1024.4L1671 1027.8Z M1698.5 1032.6L1674 1026.6L1674.4 1029.6Z" fill="#9a2a30" stroke="#d8d0d0" stroke-width=".9"/><path d="M1641.8 1008.6Q1648 1013 1654 1024.2Q1662 1008 1674.6 995.2" fill="none" stroke="#e4e4e4" stroke-width="5.4" stroke-linecap="round" opacity=".8"/><path d="M1641.8 1008.6Q1648 1013 1654 1024.2Q1662 1008 1674.6 995.2" fill="none" stroke="#3a3236" stroke-width="3.4" stroke-linecap="round"/></g>
<text x="1677.0" y="1024.2" font-size="25.2" fill="#a82c38" textLength="145.5" lengthAdjust="spacingAndGlyphs" font-weight="bold" opacity=".78" stroke="#e6d4d4" stroke-width="1.5" paint-order="stroke">NOTEBOOK</text>
<text x="1823.0" y="1024.2" font-size="25.2" fill="#2c2c2c" textLength="89.5" lengthAdjust="spacingAndGlyphs" opacity=".85" stroke="#e4e4e4" stroke-width="1.7" paint-order="stroke">CHECK</text>
</svg>
</body></html>
